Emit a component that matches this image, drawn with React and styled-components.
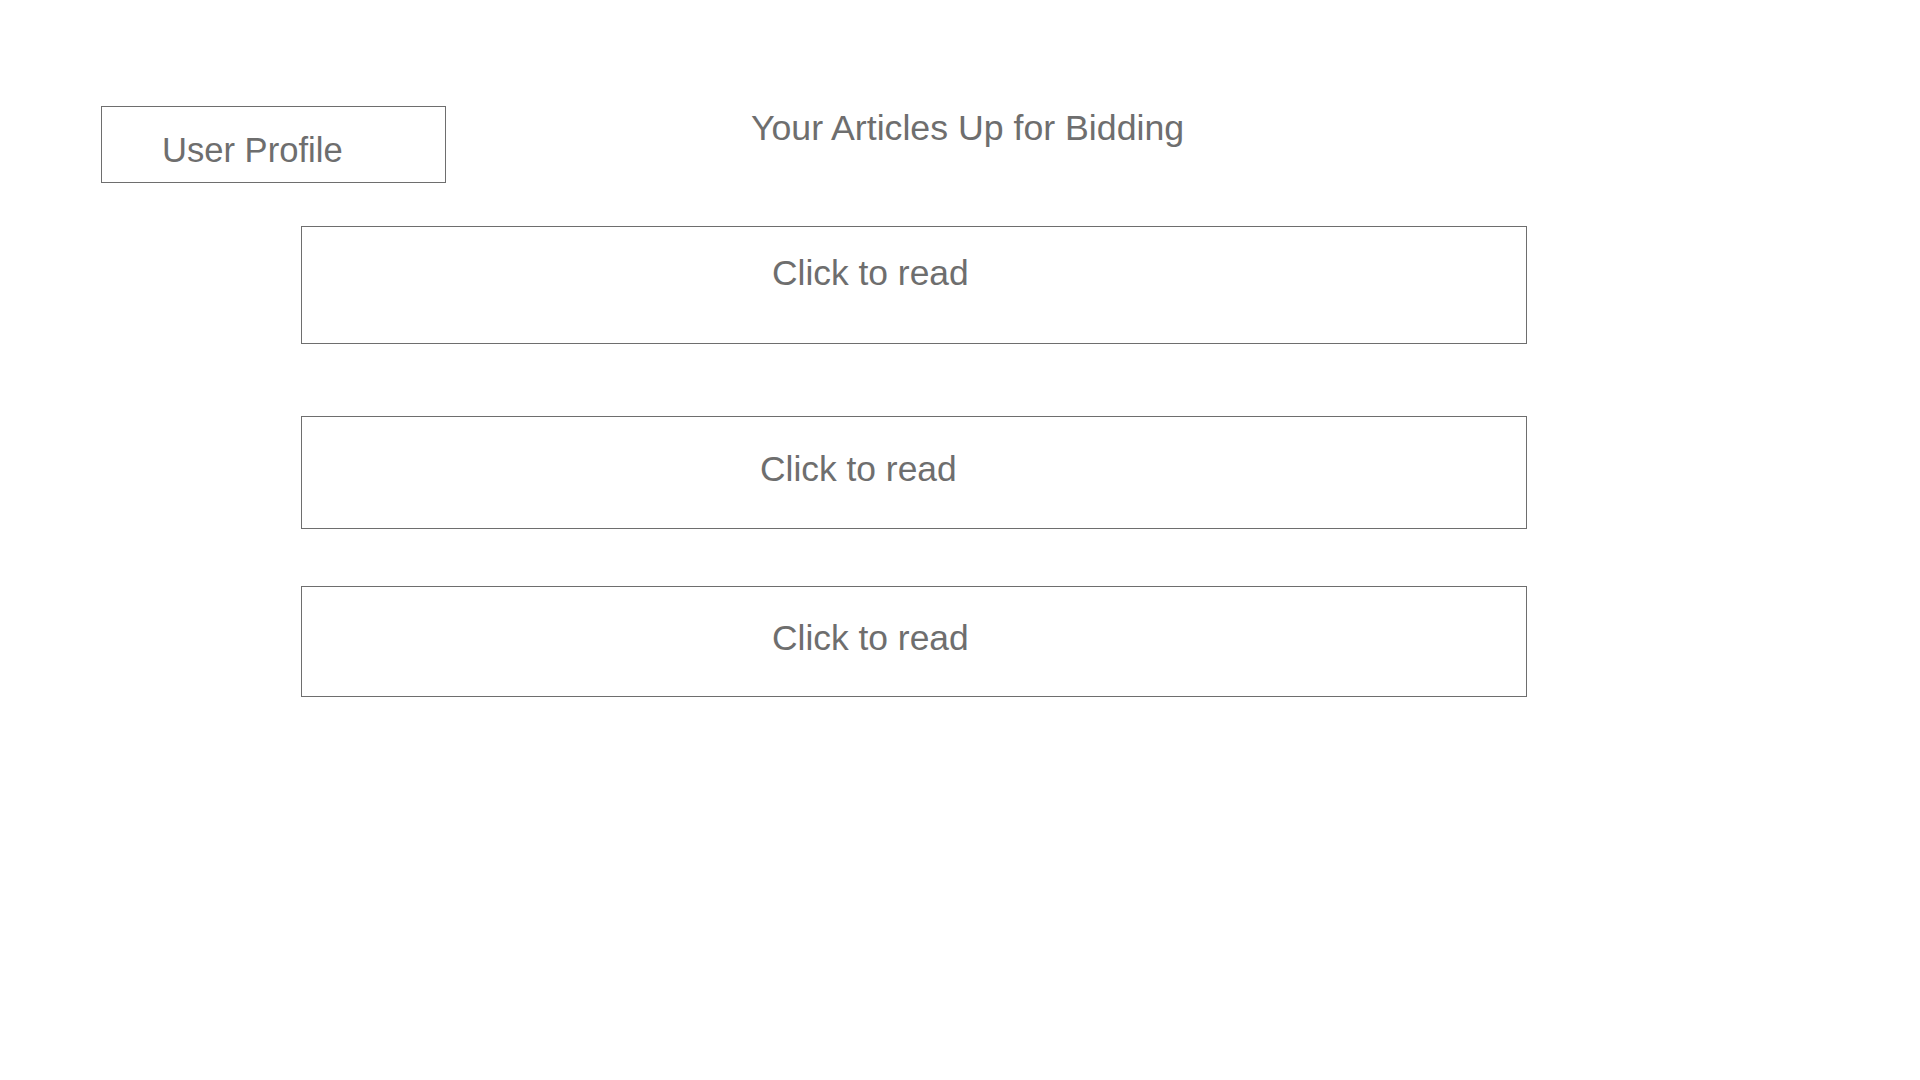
import React from "react";
import styled, { createGlobalStyle } from "styled-components";

const GlobalStyle = createGlobalStyle`
    html, body {
        margin: 0;
        padding: 0;
        background: #ffffff;
    }
    body {
        font-family: "Liberation Sans", Arial, sans-serif;
        color: #6e6e6e;
    }
`;

const Wrapper = styled.div`
    width: 1920px;
    min-height: 1080px;
    box-sizing: border-box;
    padding: 106px 0 0 101px;
`;

const Header = styled.div`
    display: flex;
    align-items: flex-start;
`;

const ProfileButton = styled.div`
    box-sizing: border-box;
    width: 345px;
    height: 77px;
    padding: 23px 0 0 60px;
    border: 1px solid #6e6e6e;
    background: #ffffff;
    font-size: 34.6px;
    line-height: 40px;
    color: #6e6e6e;
    cursor: pointer;
`;

const TitleText = styled.h1`
    margin: 2px 0 0 305px;
    font-size: 35.7px;
    font-weight: 400;
    line-height: 40px;
    color: #6e6e6e;
`;

const ArticleList = styled.div`
    display: flex;
    flex-direction: column;
    margin: 43px 0 0 200px;
`;

const ArticleCard = styled.div`
    box-sizing: border-box;
    width: 1226px;
    height: ${(props) => props.height}px;
    margin-top: ${(props) => props.gap}px;
    padding: ${(props) => props.top}px 0 0 ${(props) => props.left}px;
    border: 1px solid #6e6e6e;
    font-size: 35.4px;
    line-height: 40px;
    cursor: pointer;
`;

const articles = [
    { id: 1, height: 118, gap: 0, top: 26, left: 470 },
    { id: 2, height: 113, gap: 72, top: 32, left: 458 },
    { id: 3, height: 111, gap: 57, top: 31, left: 470 },
];

function App() {
    return (
        <>
            <GlobalStyle />
            <Wrapper>
                <Header>
                    <ProfileButton>User Profile</ProfileButton>
                    <TitleText>Your Articles Up for Bidding</TitleText>
                </Header>
                <ArticleList>
                    {articles.map((item) => (
                        <ArticleCard
                            key={item.id}
                            height={item.height}
                            gap={item.gap}
                            top={item.top}
                            left={item.left}
                        >
                            Click to read
                        </ArticleCard>
                    ))}
                </ArticleList>
            </Wrapper>
        </>
    );
}

export default App;
